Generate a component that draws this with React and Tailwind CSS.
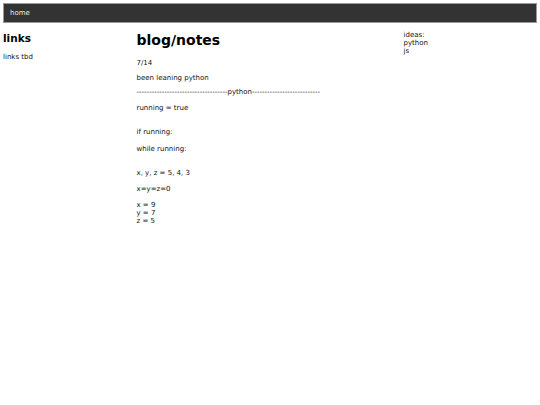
import React from 'react'

const font = { fontFamily: '"DejaVu Sans", Verdana, sans-serif' }

export default function App() {
  return (
    <div className="min-h-[405px] bg-white p-[3px] text-[7px] leading-[8px] text-[#111]" style={font}>
      {/* top nav */}
      <div className="flex h-[20px] items-center border border-[#9a9a9a] bg-[#333333] px-[6px]">
        <span className="text-[#e8e8e8]">home</span>
      </div>

      <div className="flex">
        {/* left column */}
        <div className="w-1/4">
          <h2 className="my-[8.7px] text-[10.5px] leading-[1.164] font-bold text-black">links</h2>
          <p>links tbd</p>
        </div>

        {/* main column */}
        <div className="flex w-1/2 flex-col">
          <h1 className="mt-[9.4px] text-[14px] leading-[1.164] font-bold text-black">blog/notes</h1>
          <p className="mt-[10.4px]">7/14</p>
          <p className="mt-[7px]">been leaning python</p>
          <p className="mt-[6px]">------------------------------------python---------------------------</p>
          <p className="mt-[8px]">running = true</p>
          <p className="mt-[16px]">if running:</p>
          <p className="mt-[9px]">while running:</p>
          <p className="mt-[16px]">x, y, z = 5, 4, 3</p>
          <p className="mt-[8px]">x=y=z=0</p>
          <p className="mt-[8px]">
            x = 9<br />y = 7<br />z = 5
          </p>
        </div>

        {/* right column */}
        <div className="w-1/4">
          <p className="my-[8px]">
            ideas:<br />python<br />js
          </p>
        </div>
      </div>
    </div>
  )
}
